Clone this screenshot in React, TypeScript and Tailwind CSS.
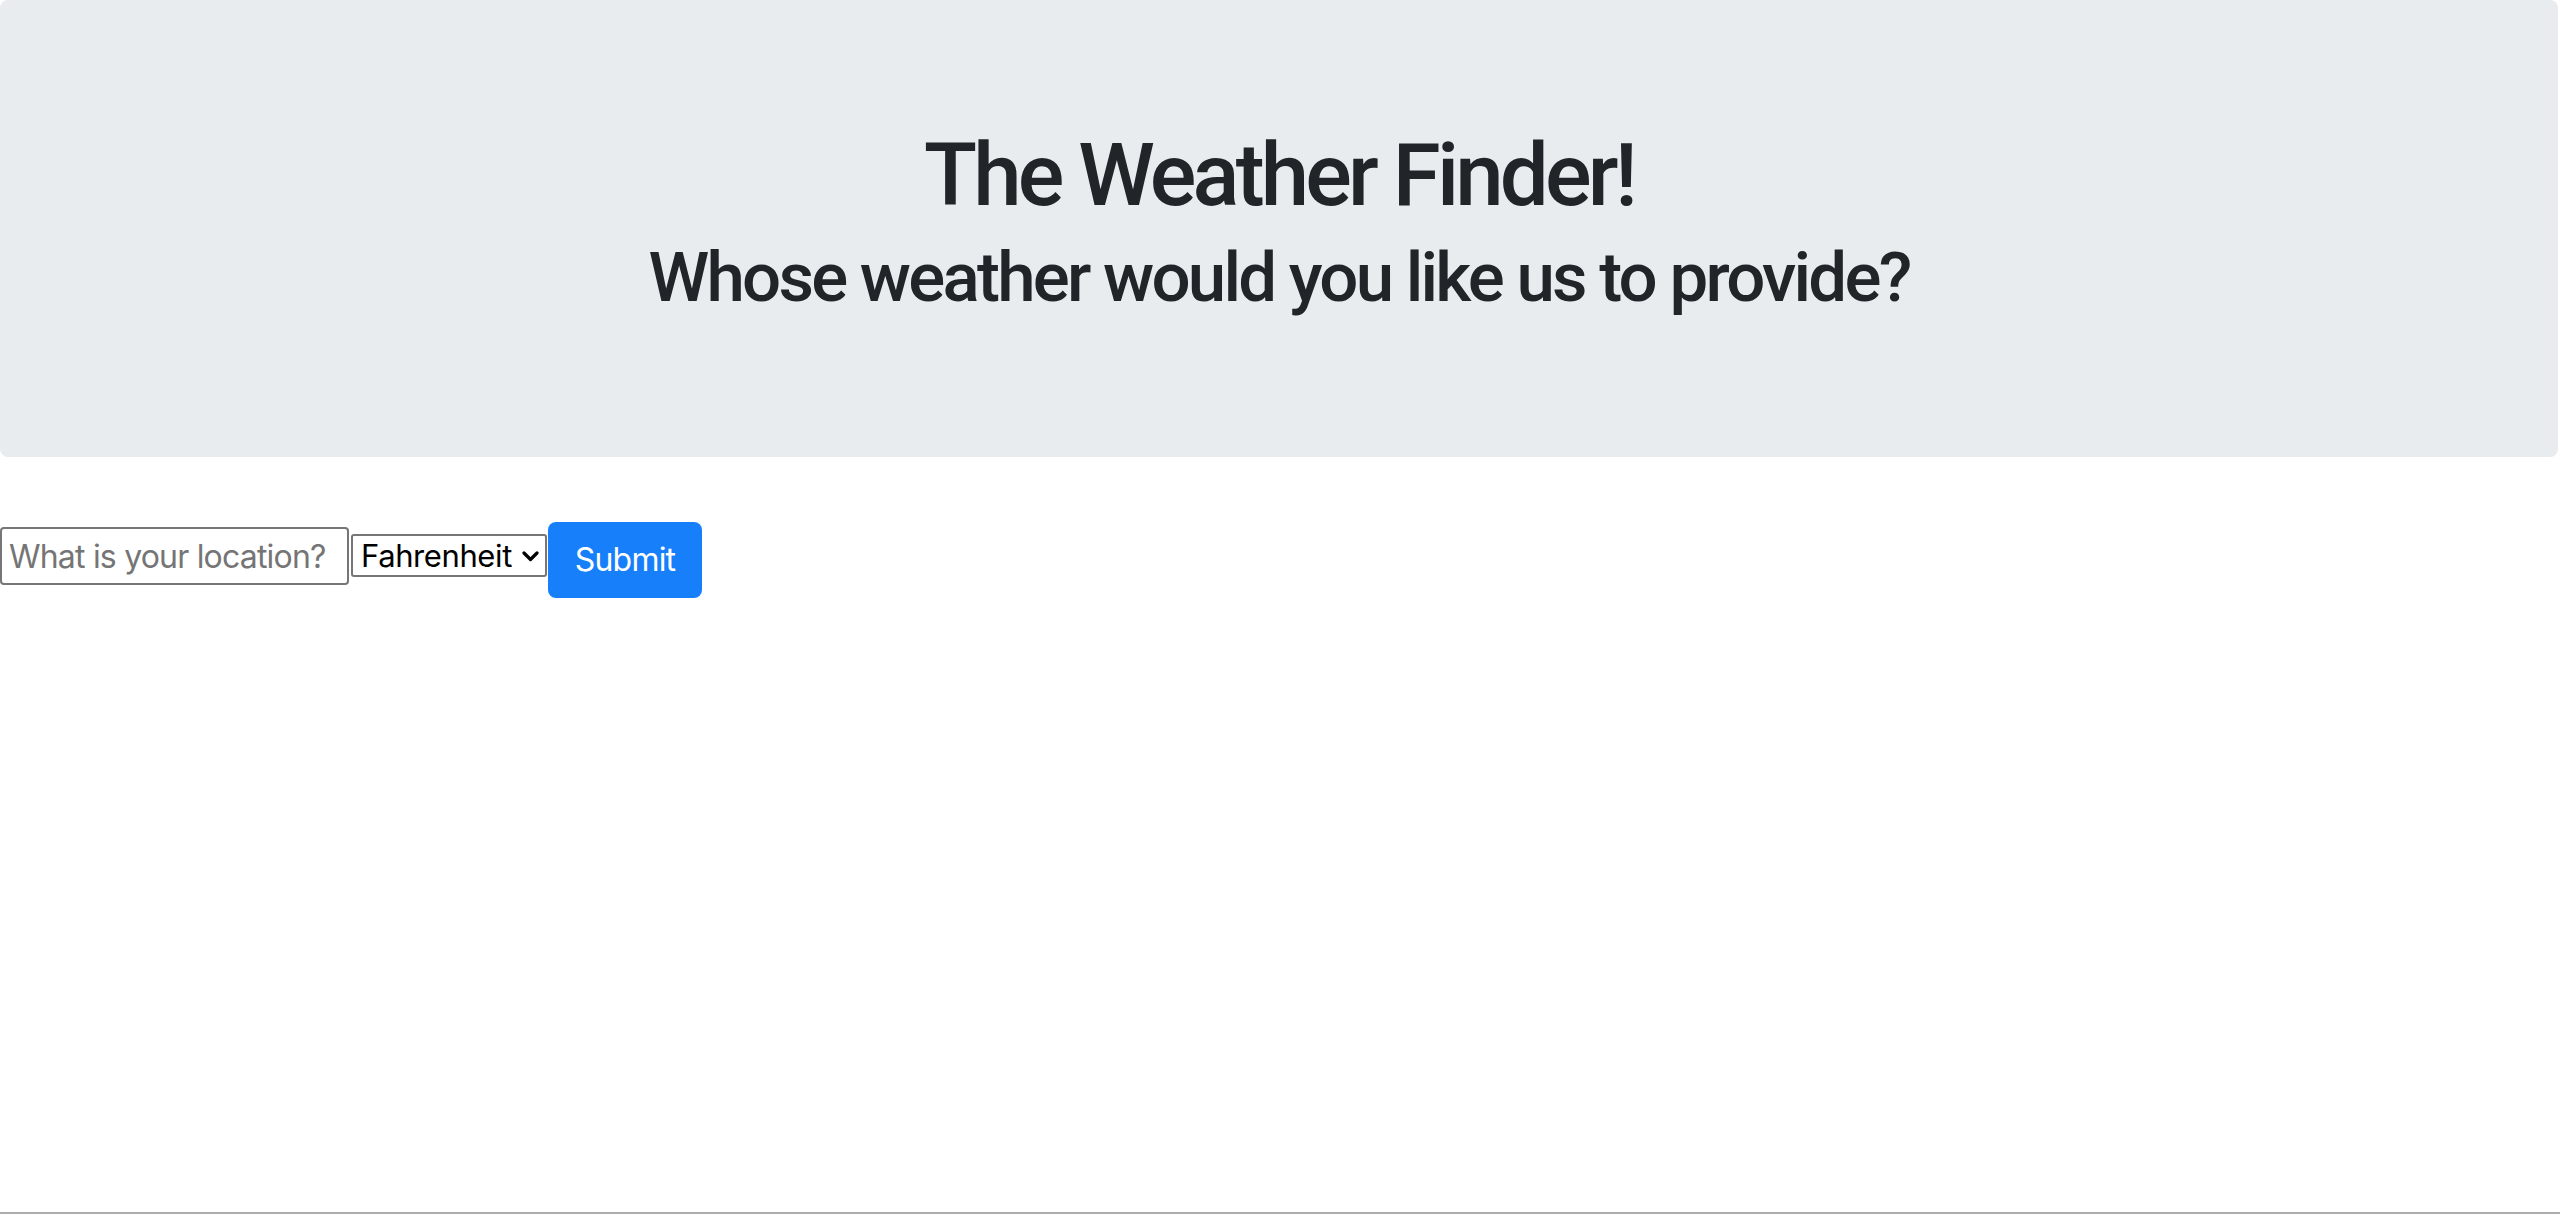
import React from "react";

export default function App() {
  return (
    <div className="w-[2560px] h-[1228px] bg-white overflow-hidden" style={{ fontFamily: "Inter, 'Noto Sans', sans-serif" }}>
      <div className="w-[2558px] h-[457px] bg-[#e9ecef] rounded-[8px] pt-[133px] text-center text-[#212529]" style={{ fontFamily: "Roboto, Inter, sans-serif" }}>
        <h1 className="text-[87px] leading-[85px] font-medium tracking-[-0.044em]">The Weather Finder!</h1>
        <h2 className="mt-[26px] text-[69px] leading-[67px] font-medium tracking-[-0.04em]">Whose weather would you like us to provide?</h2>
      </div>
      <form className="flex items-start pt-[65px]" onSubmit={(e) => e.preventDefault()}>
        <input
          type="text"
          placeholder="What is your location?"
          className="mt-[5px] w-[349px] h-[58px] border-2 border-[#767676] rounded-[4px] pl-[7px] text-[32px] tracking-[-0.8px] text-black placeholder:text-[#757575] outline-none"
        />
        <div className="relative ml-[2px] mt-[12px]">
          <select className="appearance-none w-[196px] h-[43px] border-2 border-[#767676] rounded-[3px] pl-[8px] text-[31px] tracking-[-0.4px] leading-none text-black bg-white outline-none">
            <option>Fahrenheit</option>
            <option>Celsius</option>
          </select>
          <svg className="absolute left-[171px] top-[17px] pointer-events-none" width="17" height="11" viewBox="0 0 17 11">
            <path d="M2 2 L8.5 8.5 L15 2" fill="none" stroke="black" strokeWidth="3.2" strokeLinecap="round" strokeLinejoin="round" />
          </svg>
        </div>
        <button type="submit" className="ml-[1px] w-[154px] h-[76px] bg-[#187ffb] rounded-[8px] text-white text-[32px] tracking-[-0.8px]">
          Submit
        </button>
      </form>
      <div className="mt-[614px] h-[2px] bg-[#adadad]" />
    </div>
  );
}
